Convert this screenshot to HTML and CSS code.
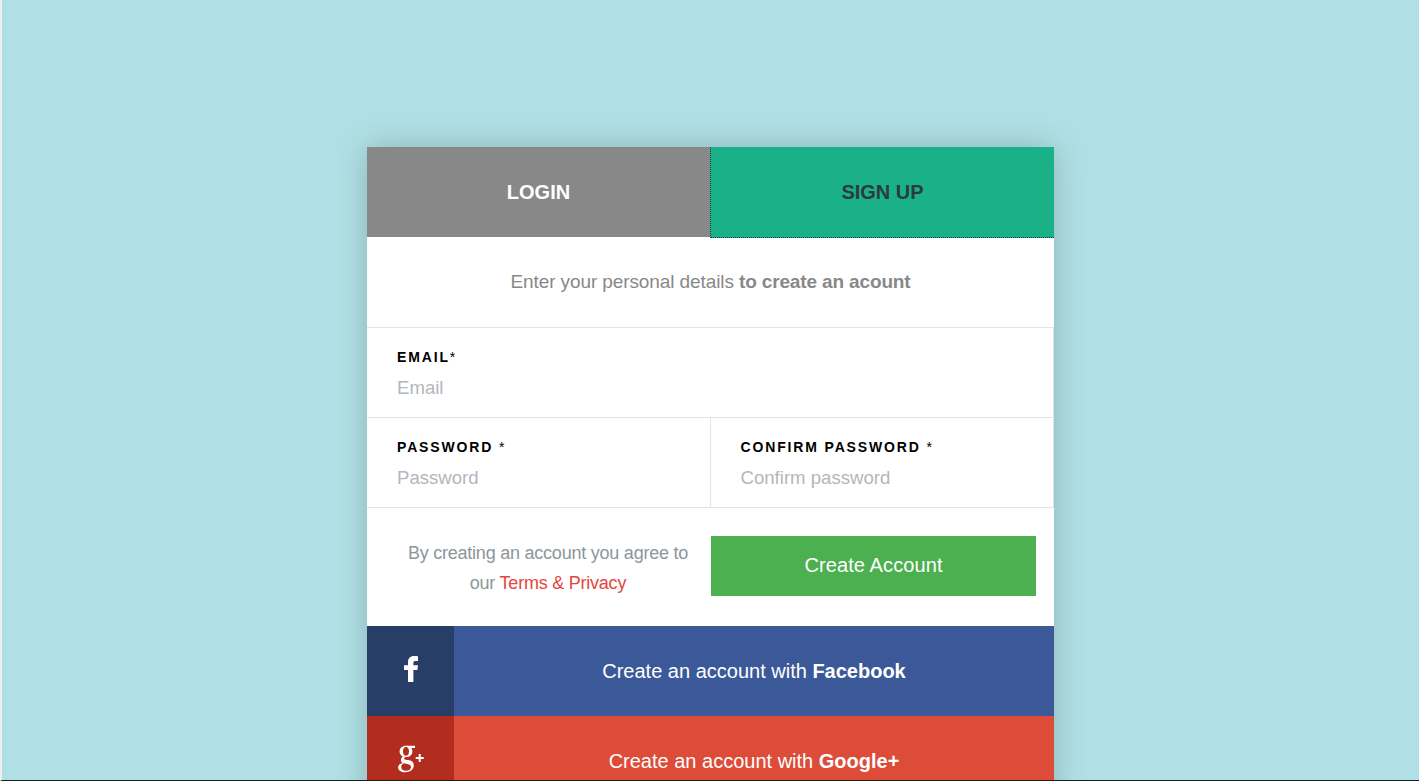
FILE: index.html
```html
<!DOCTYPE html>
<html lang="en">
<head>
<meta charset="utf-8">
<title>Sign up</title>
<link rel="stylesheet" href="styles.css">
</head>
<body>
<main class="card">
  <nav class="tabs">
    <a class="tab tab-login"><span>LOGIN</span></a>
    <a class="tab tab-signup"><span>SIGN UP</span></a>
  </nav>
  <p class="intro"><span>Enter your personal details <b>to create an acount</b></span></p>
  <form>
    <div class="fields">
      <div class="field field-wide">
        <label for="email">EMAIL<i>*</i></label>
        <input id="email" type="text" placeholder="Email">
      </div>
      <div class="field">
        <label for="password">PASSWORD <i>*</i></label>
        <input id="password" type="password" placeholder="Password">
      </div>
      <div class="field field-last">
        <label for="confirm">CONFIRM PASSWORD <i>*</i></label>
        <input id="confirm" type="password" placeholder="Confirm password">
      </div>
    </div>
    <div class="submit-row">
      <p class="terms">By creating an account you agree to<br>our <a>Terms &amp; Privacy</a></p>
      <button type="button" class="create">Create Account</button>
    </div>
  </form>
  <a class="social facebook">
    <span class="social-icon"><svg width="16" height="26" viewBox="0 0 16 26"><path fill="#fff" d="M15 .2V5h-2.700C10.800 5 10.400 5.700 10.400 7v2.300H15l-.6 4.600h-4V26H5V13.900H1V9.300h4V6.100C5 2.200 7.400 0 11 0c1.800 0 3.300.1 4 .2z"/></svg></span>
    <span class="social-text">Create an account with <b>Facebook</b></span>
  </a>
  <a class="social google">
    <span class="social-icon"><svg width="28" height="28" viewBox="0 0 28 28"><g fill="#fff" fill-rule="evenodd"><path d="M9 .8C5.200.8 2.600 3.200 2.600 6.400S5.200 12 9 12s6.400-2.400 6.400-5.600S12.800.8 9 .8zm0 1.300c1.900 0 3 1.900 3 4.300s-1.100 4.300-3 4.300-3-1.900-3-4.300 1.100-4.300 3-4.300z"/><path d="M9.500.8H18v2.100h-5.500z"/><path d="M6 11.200 8.500 12c-1.500.8-1.800 1.500-1 2.200.6.500 1.800.6 3.600.9 3.800.6 5.700 2.200 5.700 5.200 0 4.200-3.500 6.900-8.600 6.900-4.200 0-7.100-1.800-7.100-4.800 0-2.300 1.700-3.900 4.700-4.500-1.200-.5-1.900-1.300-1.900-2.500 0-1.600.9-3.200 2.100-4.200zM6.800 18.300c-1.600.8-2.600 2-2.600 3.700 0 2.300 1.800 3.800 4.800 3.800 3.200 0 5-1.500 5-3.700 0-2-1.300-2.800-3.700-3.200z"/><path d="M18.700 12h3V9h2v3h3v2.100h-3v3h-2v-3h-3z"/></g></svg></span>
    <span class="social-text">Create an account with <b>Google+</b></span>
  </a>
</main>
</body>
</html>
```
FILE: styles.css
```css
* { box-sizing: border-box; }
html { height: 100%; overflow: hidden; }
body {
  margin: 0;
  height: 781px;
  overflow: hidden;
  padding-top: 147px;
  border-left: 2px solid #efefef;
  border-bottom: 1px solid #1c1c1c;
  background: #b0e0e5;
  font-family: "Liberation Sans", Arial, sans-serif;
}
p { margin: 0; }
.card {
  width: 687px;
  margin-left: 365px;
  background: #fff;
  box-shadow: 0 0 30px rgba(0, 0, 0, 0.2);
}
.tabs { display: flex; height: 90px; }
.tab {
  flex: none;
  width: 343px;
  display: flex;
  align-items: center;
  justify-content: center;
  font-size: 20px;
  font-weight: bold;
}
.tab-login { background: #888; color: #fff; }
.tab-signup {
  width: 344px;
  height: 91px;
  background: #1bb188;
  color: #2a3b3d;
  border-left: 1px dotted #173c3a;
  border-bottom: 1px dotted #173c3a;
}
.intro {
  height: 90px;
  display: flex;
  align-items: center;
  justify-content: center;
  font-size: 19px;
  letter-spacing: -0.1px;
  color: #888;
}
.intro b { letter-spacing: -0.14px; }
.fields {
  display: grid;
  grid-template-columns: 344px 343px;
  grid-auto-rows: 90px;
  border-bottom: 1px solid #e3e3e3;
}
.field {
  padding: 19px 0 0 30px;
  border-top: 1px solid #e3e3e3;
  border-right: 1px solid #e3e3e3;
}
.field-wide { grid-column: 1 / 3; }
.field-last { padding-left: 29.5px; }
.field label {
  display: block;
  height: 18px;
  line-height: 20px;
  font-size: 14px;
  font-weight: bold;
  letter-spacing: 1.85px;
  color: #000;
}
.field i { font-style: normal; font-weight: normal; }
.field input {
  display: block;
  width: 290px;
  height: 26px;
  margin-top: 10px;
  padding: 0;
  border: 0;
  background: none;
  font: 18.6px/26px "Liberation Sans", Arial, sans-serif;
}
.field input::placeholder { color: #b3b6bb; }
.submit-row { display: flex; height: 118px; padding-top: 28px; }
.terms {
  width: 326px;
  margin-left: 18px;
  padding-top: 2px;
  text-align: center;
  font-size: 18px;
  line-height: 30px;
  letter-spacing: -0.23px;
  color: #8b979b;
}
.terms a { color: #e5463d; }
.create {
  width: 325px;
  height: 60px;
  padding: 0 0 2px;
  border: 0;
  background: #4caf50;
  color: #fff;
  font: 20px "Liberation Sans", Arial, sans-serif;
  letter-spacing: 0.1px;
}
.social { display: flex; height: 90px; color: #fff; font-size: 20px; }
.social-icon {
  width: 87px;
  display: flex;
  align-items: center;
  justify-content: center;
}
.social-text {
  flex: 1;
  display: flex;
  align-items: center;
  justify-content: center;
  white-space: pre;
}
.facebook { background: #3b5998; }
.facebook .social-icon { background: #283d68; padding-bottom: 4px; }
.google { background: #dd4b39; }
.google .social-icon { background: #b32d1e; padding-bottom: 4px; }
```
